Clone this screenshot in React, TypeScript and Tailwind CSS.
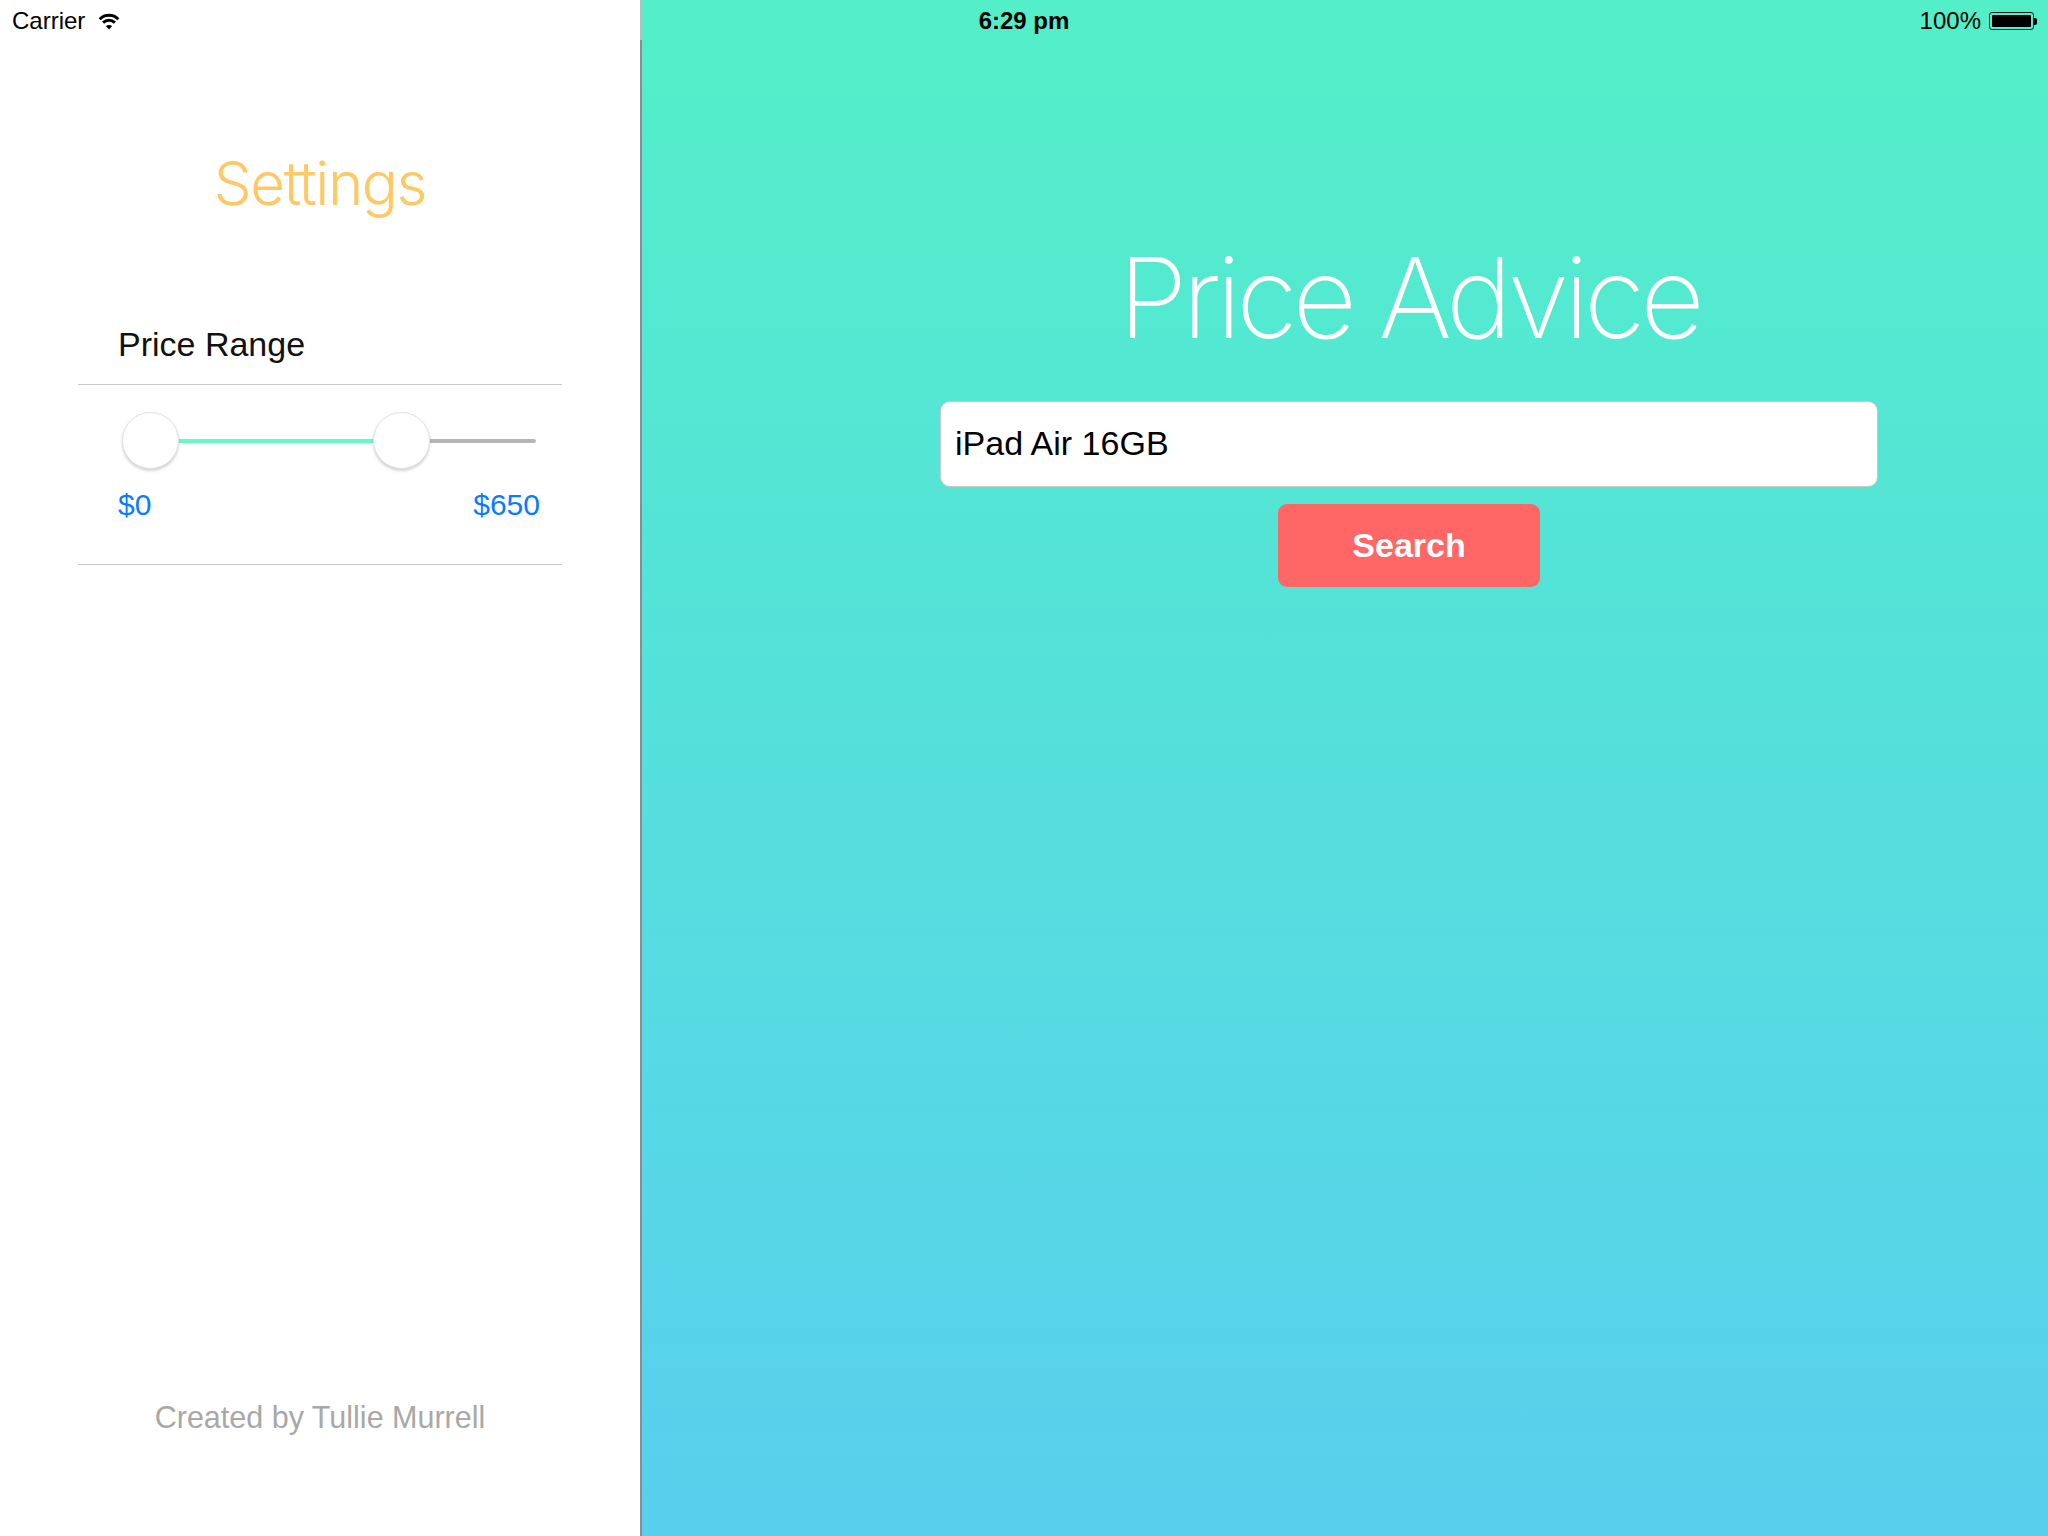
import React from "react";

function Wifi() {
  return (
    <svg width="22" height="17" viewBox="0 0 22 17" className="block">
      <path d="M1.7 6.2 A13.2 13.2 0 0 1 20.3 6.2" fill="none" stroke="#000" strokeWidth="3" />
      <path d="M5.1 9.6 A8.4 8.4 0 0 1 16.9 9.6" fill="none" stroke="#000" strokeWidth="3" />
      <path d="M11 16.6 L7.9 13.3 A4.4 4.4 0 0 1 14.1 13.3 Z" fill="#000" />
    </svg>
  );
}

function Battery() {
  return (
    <div className="flex items-center">
      <div className="w-[45px] h-[18px] border border-[#1a1a1a] rounded-[3px] p-[2px]">
        <div className="w-full h-full bg-black rounded-[1px]" />
      </div>
      <div className="w-[3px] h-[7px] bg-black rounded-r-[2px]" />
    </div>
  );
}

function Thumb({ left }: { left: number }) {
  return (
    <div
      className="absolute top-0 w-[57px] h-[57px] rounded-full bg-white border border-[#e2e2e2] shadow-[0_2px_3px_rgba(0,0,0,0.18)]"
      style={{ left }}
    />
  );
}

export default function App() {
  const sans = "font-['Liberation_Sans',Arial,sans-serif]";
  const thin = "font-['Inter','Liberation_Sans',sans-serif]";
  return (
    <div className={`relative w-[2048px] h-[1536px] flex overflow-hidden ${sans}`}>
      {/* Left panel */}
      <div className="w-[640px] h-full bg-white flex flex-col">
        <div className={`pt-[153px] text-center text-[60px] leading-none font-light text-[#FEC864] tracking-[-1.4px] ${thin}`}>
          Settings
        </div>
        <div className="px-[78px] mt-[114px]">
          <div className="pl-[40px] text-[34px] leading-none text-[#111]">Price Range</div>
          <div className="mt-[23px] h-px bg-[#c8c7cc]" />
          <div className="mt-[27px] ml-[44px] w-[414px] h-[57px] relative">
            <div className="absolute left-[2px] right-0 top-[27px] h-[4px] rounded-full bg-[#b6b6b6]" />
            <div className="absolute left-[28px] w-[252px] top-[27px] h-[4px] bg-[#64F9C8]" />
            <Thumb left={0} />
            <Thumb left={251} />
          </div>
          <div className="mt-[21px] pl-[40px] pr-[22px] flex justify-between text-[30px] leading-none text-[#0A7AFF]">
            <span>$0</span>
            <span>$650</span>
          </div>
          <div className="mt-[44px] h-px bg-[#c8c7cc]" />
        </div>
        <div className="mt-auto pb-[104px] text-center text-[30.5px] leading-none text-[#a8a8a8]">
          Created by Tullie Murrell
        </div>
      </div>

      {/* Divider */}
      <div className="w-[2px] h-full flex flex-col">
        <div className="h-[40px] bg-[#bcbcbc]" />
        <div className="flex-1 bg-[#8f8b94]" />
      </div>

      {/* Right panel */}
      <div className="flex-1 h-full bg-gradient-to-b from-[#53EFC8] to-[#58CFEE] flex flex-col items-center pl-[128px]">
        <div className={`pt-[241px] text-[112px] leading-none font-extralight text-white tracking-[-5px] ${thin}`}>
          Price Advice
        </div>
        <div className="mt-[48px] w-[938px] h-[86px] bg-white border border-[#c9c9c9] rounded-[10px] flex items-center pl-[14px] pb-[2px] text-[34px] text-black">
          iPad Air 16GB
        </div>
        <button className="mt-[17px] w-[262px] h-[83px] bg-[#FF6666] rounded-[9px] text-white text-[34px] font-bold flex items-center justify-center">
          Search
        </button>
      </div>

      {/* Status bar overlay */}
      <div className="absolute top-0 left-0 right-0 h-[40px] text-[24px] leading-none text-black">
        <div className="absolute left-[12px] top-[9px] flex items-center gap-[13px]">
          <span>Carrier</span>
          <Wifi />
        </div>
        <div className="absolute left-0 right-0 top-[9px] flex justify-center">
          <span className="font-bold">6:29 pm</span>
        </div>
        <div className="absolute right-[11px] top-[9px] flex items-center gap-[8px]">
          <span>100%</span>
          <Battery />
        </div>
      </div>
    </div>
  );
}
